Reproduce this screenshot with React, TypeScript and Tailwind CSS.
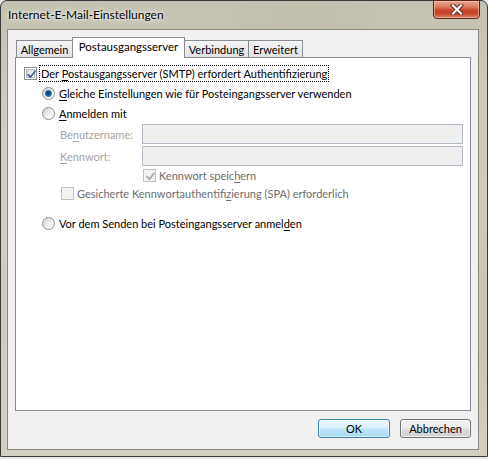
import React from "react";

function CheckBox({ checked, disabled }: { checked?: boolean; disabled?: boolean }) {
  return (
    <span
      className={
        disabled
          ? "relative flex w-[13px] h-[13px] shrink-0 border border-[#c0c0c0] bg-[#f4f4f4] p-[1px]"
          : "relative flex w-[13px] h-[13px] shrink-0 border border-[#8e8f8f] bg-white p-[1px]"
      }
    >
      <span
        className={
          disabled
            ? "flex-1 bg-[#f2f2f2]"
            : "flex-1 border border-[#b8bcc4] bg-[linear-gradient(135deg,#d3d6db_0%,#eceef0_55%,#fbfbfb_100%)]"
        }
      />
      {checked && (
        <svg className="absolute left-[1px] top-[1px]" width="11" height="11" viewBox="0 0 11 11">
          <path
            d="M2 5.6 L4.4 8.2 L9 2.2"
            fill="none"
            stroke={disabled ? "#a8a8a8" : "#4a5f97"}
            strokeWidth="1.7"
            strokeLinecap="round"
            strokeLinejoin="round"
          />
        </svg>
      )}
    </span>
  );
}

function Radio({ checked }: { checked?: boolean }) {
  return (
    <span className="relative flex items-center justify-center w-[13px] h-[13px] shrink-0 rounded-full border border-[#8e8f8f] bg-[linear-gradient(135deg,#cfd2d6_0%,#eef0f2_55%,#ffffff_100%)]">
      {checked && (
        <span className="w-[7px] h-[7px] rounded-full bg-[radial-gradient(circle_at_45%_45%,#0b3565_0%,#1a5d9c_40%,#3f9bd8_75%,#7ccaf3_100%)]" />
      )}
    </span>
  );
}

function U({ children }: { children: React.ReactNode }) {
  return <span className="underline underline-offset-[2px] decoration-[1px]">{children}</span>;
}

export default function App() {
  return (
    <div className="w-[488px] h-[459px] bg-[#e8e8e8] font-['Lato','Noto_Sans',sans-serif] text-[11px] text-black leading-none overflow-hidden">
      <div className="w-[488px] h-[457px] flex flex-col rounded-t-[7px] border border-[#3a3a3a] bg-[radial-gradient(ellipse_at_18%_40%,#d9d6ca_0%,rgba(217,214,202,0)_30%),radial-gradient(ellipse_at_62%_25%,#bab5a3_0%,rgba(186,181,163,0)_28%),radial-gradient(ellipse_at_85%_70%,#c4bfae_0%,rgba(196,191,174,0)_30%),linear-gradient(180deg,#c5c1b1_0%,#cdcabb_20%,#d3d0c2_100%)]">
        {/* title bar */}
        <div className="h-[28px] flex items-start justify-between">
          <div className="pl-[7px] pt-[8px] text-[12px] text-black [text-shadow:0_0_6px_#ffffff,0_0_3px_#ffffff]">
            Internet-E-Mail-Einstellungen
          </div>
          <div className="mr-[7px] w-[47px] h-[19px] -mt-[1px] rounded-b-[4px] border border-[#5a2218] bg-[linear-gradient(180deg,#e9a893_0%,#dc7a60_35%,#c7452a_55%,#c5452b_75%,#dd8a6c_100%)] shadow-[inset_0_0_0_1px_rgba(255,210,195,0.55)] flex items-center justify-center">
            <svg width="14" height="11" viewBox="0 0 14 11">
              <path d="M3 1.5 L11 9.5 M11 1.5 L3 9.5" stroke="#5a2a20" strokeWidth="4" strokeLinecap="square" />
              <path d="M3 1.5 L11 9.5 M11 1.5 L3 9.5" stroke="#ffffff" strokeWidth="2.2" strokeLinecap="square" />
            </svg>
          </div>
        </div>

        {/* frame + client */}
        <div className="flex-1 flex pl-[6px] pr-[8px] pb-[6px]">
          <div className="flex-1 flex flex-col border border-[#8a877c] bg-[#f0f0f0] pt-[7px] px-[7px]">
            {/* tabs */}
            <div className="flex items-end h-[20px] pl-[1px]">
              <div className="w-[57px] h-[17px] flex items-center justify-center border border-b-0 border-[#898c95] bg-[linear-gradient(180deg,#f4f4f4_0%,#ebebeb_50%,#e2e2e2_100%)]">
                Allgemein
              </div>
              <div className="relative z-10 -ml-px w-[113px] h-[21px] -mb-px flex items-center justify-center border border-b-0 border-[#898c95] bg-white pb-[2px] text-[11.5px]">
                Postausgangsserver
              </div>
              <div className="-ml-px w-[65px] h-[17px] flex items-center justify-center border border-b-0 border-[#898c95] bg-[linear-gradient(180deg,#f4f4f4_0%,#ebebeb_50%,#e2e2e2_100%)]">
                Verbindung
              </div>
              <div className="-ml-px w-[55px] h-[17px] flex items-center justify-center border border-b-0 border-[#898c95] bg-[linear-gradient(180deg,#f4f4f4_0%,#ebebeb_50%,#e2e2e2_100%)]">
                Erweitert
              </div>
            </div>

            {/* panel */}
            <div className="h-[354px] border border-[#898c95] bg-white flex flex-col pt-[5px]">
              <div className="h-[20px] flex items-center pl-[8px]">
                <CheckBox checked />
                <span className="ml-[2px] px-[1px] py-[2px] border border-dotted border-black">
                  Der <U>P</U>ostausgangsserver (SMTP) erfordert Authentifizierung
                </span>
              </div>
              <div className="h-[20px] flex items-center pl-[26px]">
                <Radio checked />
                <span className="ml-[4px]">
                  <U>G</U>leiche Einstellungen wie für Posteingangsserver verwenden
                </span>
              </div>
              <div className="h-[20px] flex items-center pl-[26px]">
                <Radio />
                <span className="ml-[4px]">
                  <U>A</U>nmelden mit
                </span>
              </div>
              <div className="mt-[1px] h-[20px] flex items-center pl-[44px] pr-[7px]">
                <span className="w-[82px] shrink-0 text-[#a3a3a3]">
                  Be<U>n</U>utzername:
                </span>
                <div className="flex-1 h-[20px] border border-[#b1b9c4] bg-[#efefef]" />
              </div>
              <div className="mt-[2px] h-[20px] flex items-center pl-[44px] pr-[7px]">
                <span className="w-[82px] shrink-0 text-[#a3a3a3]">
                  <U>K</U>ennwort:
                </span>
                <div className="flex-1 h-[20px] border border-[#b1b9c4] bg-[#efefef]" />
              </div>
              <div className="h-[18px] flex items-center pl-[127px]">
                <CheckBox checked disabled />
                <span className="ml-[3px] text-[#6d6d6d]">
                  Kennwort speic<U>h</U>ern
                </span>
              </div>
              <div className="h-[19px] flex items-center pl-[45px]">
                <CheckBox disabled />
                <span className="ml-[3px] text-[#6d6d6d]">
                  Gesicherte Kennwortauthentifi<U>z</U>ierung (SPA) erforderlich
                </span>
              </div>
              <div className="mt-[10px] h-[20px] flex items-center pl-[26px]">
                <Radio />
                <span className="ml-[4px]">
                  Vor dem Senden bei Posteingangsserver anmel<U>d</U>en
                </span>
              </div>
            </div>

            {/* buttons */}
            <div className="mt-[8px] flex justify-end gap-[10px]">
              <div className="w-[72px] h-[19px] flex items-center justify-center rounded-[3px] border border-[#3c7fb1] bg-[linear-gradient(180deg,#eaf6fd_0%,#d9f0fc_48%,#bee6fd_52%,#a7d9f5_100%)] shadow-[inset_0_0_0_1px_rgba(255,255,255,0.6)]">
                OK
              </div>
              <div className="w-[71px] h-[19px] flex items-center justify-center rounded-[3px] border border-[#707070] bg-[linear-gradient(180deg,#f2f2f2_0%,#ebebeb_48%,#dddddd_52%,#cfcfcf_100%)] shadow-[inset_0_0_0_1px_rgba(255,255,255,0.7)]">
                Abbrechen
              </div>
            </div>
          </div>
        </div>
      </div>
    </div>
  );
}
